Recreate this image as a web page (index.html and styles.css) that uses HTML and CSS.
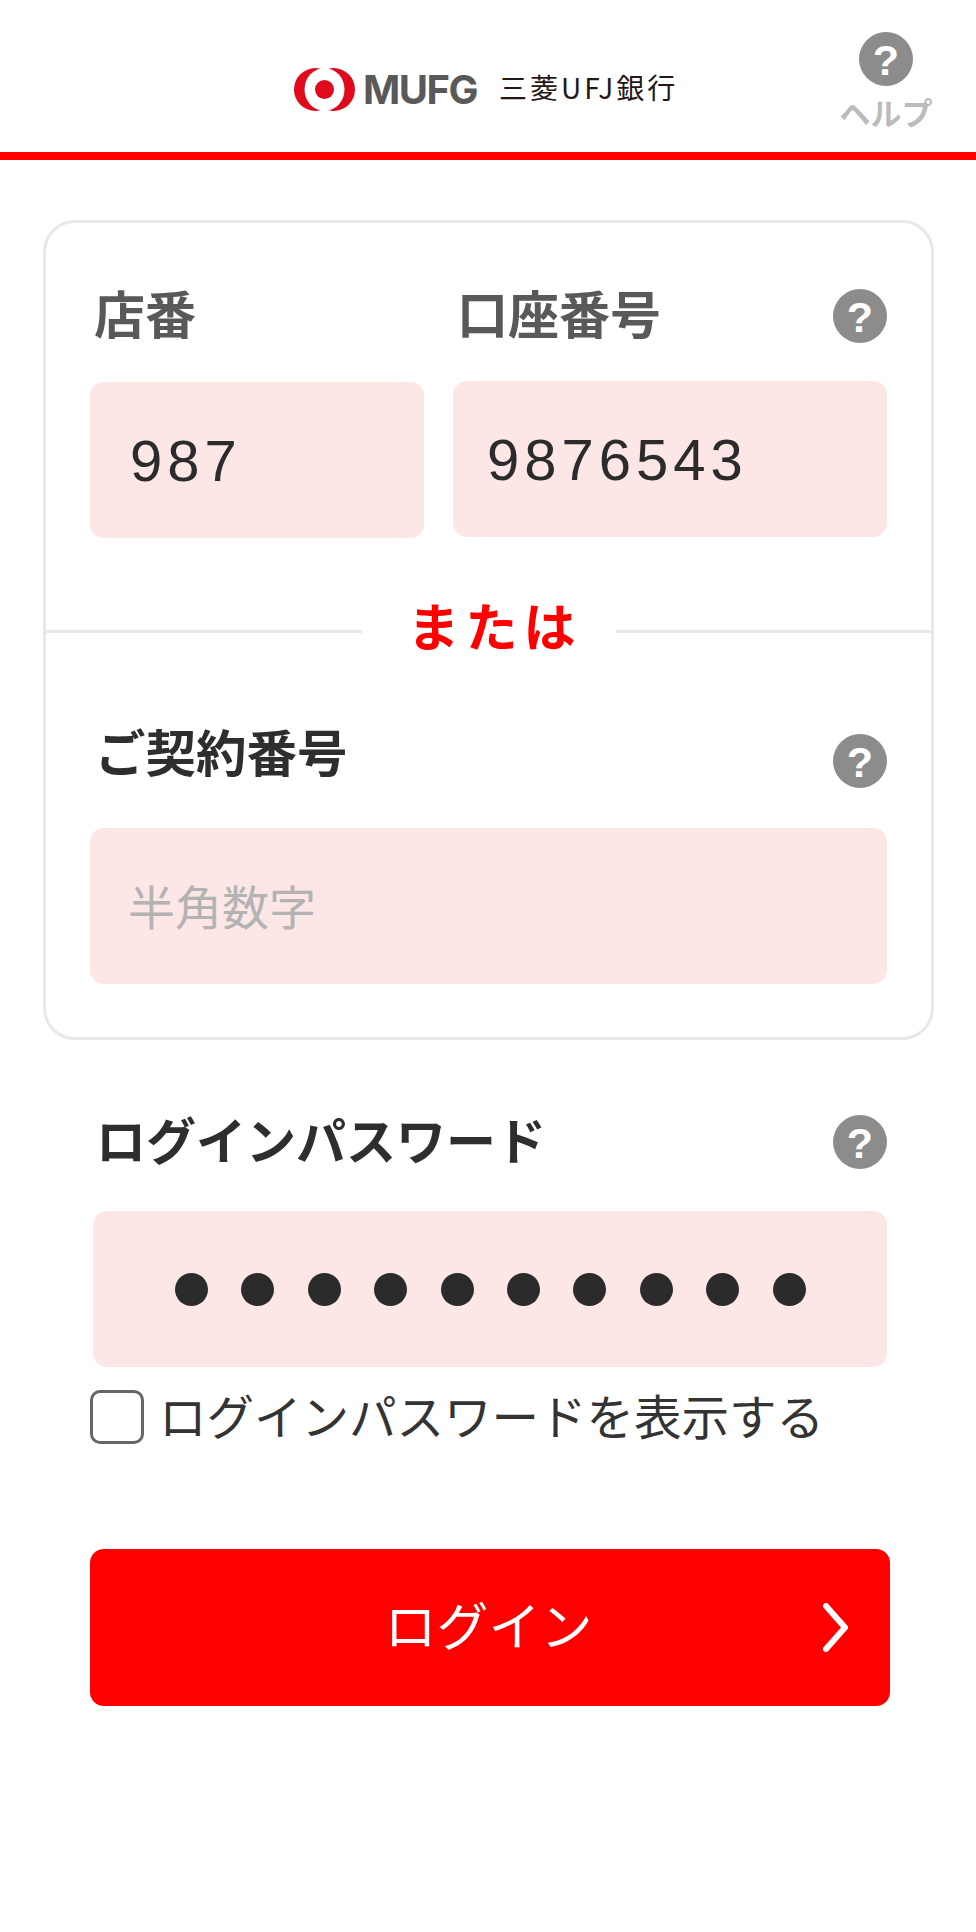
FILE: index.html
```html
<!DOCTYPE html>
<html lang="ja">
<head>
  <meta charset="UTF-8">
  <meta name="viewport" content="width=device-width, initial-scale=1.0">
  <title>三菱UFJ銀行 ログイン</title>
  <link rel="stylesheet" href="styles.css">
</head>
<body>
  <header class="header">
    <div class="brand">
      <svg class="brand-mark" viewBox="0 0 61 43" width="61" height="43">
        <circle cx="21.5" cy="21.5" r="21.5" fill="#e00a1c"/>
        <circle cx="39.5" cy="21.5" r="21.5" fill="#e00a1c"/>
        <ellipse cx="30.5" cy="21.5" rx="20" ry="21.5" fill="#fff"/>
        <circle cx="30.5" cy="21.5" r="9.5" fill="#e00a1c"/>
      </svg>
      <span class="brand-mufg">MUFG</span>
      <span class="brand-bank">三菱UFJ銀行</span>
    </div>
    <a class="help-link" href="#">
      <span class="q-icon">?</span>
      <span class="help-text">ヘルプ</span>
    </a>
  </header>

  <main class="content">
    <section class="card">
      <div class="branch-row">
        <div class="field-shop">
          <div class="label-row"><span class="label label-grey">店番</span></div>
          <div class="input input-value">987</div>
        </div>
        <div class="field-account">
          <div class="label-row">
            <span class="label label-grey">口座番号</span>
            <span class="q-icon">?</span>
          </div>
          <div class="input input-value">9876543</div>
        </div>
      </div>

      <div class="or-row"><span class="or-text">または</span></div>

      <div class="contract">
        <div class="label-row">
          <span class="label">ご契約番号</span>
          <span class="q-icon">?</span>
        </div>
        <div class="input input-placeholder">半角数字</div>
      </div>
    </section>

    <section class="password">
      <div class="label-row">
        <span class="label">ログインパスワード</span>
        <span class="q-icon">?</span>
      </div>
      <div class="input input-dots">
        <i></i><i></i><i></i><i></i><i></i><i></i><i></i><i></i><i></i><i></i>
      </div>
      <label class="show-pass">
        <span class="checkbox"></span>
        <span class="show-text">ログインパスワードを表示する</span>
      </label>
    </section>

    <button class="login-btn">
      <span>ログイン</span>
      <svg class="chevron" viewBox="0 0 25 49" width="25" height="49">
        <path d="M3 3 L22 24.5 L3 46" fill="none" stroke="#fff" stroke-width="6" stroke-linecap="round" stroke-linejoin="round"/>
      </svg>
    </button>
  </main>
</body>
</html>
```

FILE: styles.css
```css
* {
  box-sizing: border-box;
}

body {
  margin: 0;
  min-height: 1932px;
  background: #fff;
  color: #2e2e2e;
  font-family: "Liberation Sans", "Noto Sans CJK JP", sans-serif;
}

.header {
  position: relative;
  height: 160px;
  border-bottom: 8px solid #f00;
}

.brand {
  display: flex;
  align-items: center;
  padding: 66px 0 0 294px;
}

.brand-mark {
  display: block;
}

.brand-mufg {
  margin-left: 8px;
  font-family: Inter, "Liberation Sans", sans-serif;
  font-size: 40px;
  font-weight: 700;
  letter-spacing: -1.5px;
  line-height: 43px;
  color: #595959;
}

.brand-bank {
  margin-left: 22px;
  margin-bottom: 4px;
  font-family: "Noto Sans CJK JP", sans-serif;
  font-size: 28px;
  line-height: 43px;
  letter-spacing: 3px;
  color: #231815;
}

.help-link {
  position: absolute;
  top: 32px;
  left: 841px;
  width: 90px;
  display: flex;
  flex-direction: column;
  align-items: center;
  text-decoration: none;
}

.help-text {
  margin-top: 4px;
  font-family: "Noto Sans CJK JP", sans-serif;
  font-size: 31px;
  font-weight: 700;
  line-height: 44px;
  color: #bbb;
  white-space: nowrap;
}

.q-icon {
  flex: none;
  width: 54px;
  height: 54px;
  border-radius: 50%;
  background: #8c8c8c;
  color: #fff;
  font-family: "Liberation Sans", sans-serif;
  font-size: 43px;
  font-weight: 700;
  line-height: 56px;
  text-align: center;
}

.content {
  padding: 60px 42px 0 43px;
}

.card {
  height: 820px;
  border: 3px solid #e8e8e8;
  border-radius: 32px;
  padding: 66px 44px 0 44px;
}

.branch-row {
  display: flex;
  gap: 29px;
}

.field-shop {
  width: 334px;
}

.field-account {
  flex: 1;
}

.label-row {
  display: flex;
  align-items: center;
  justify-content: space-between;
  height: 54px;
  padding-left: 4px;
}

.label {
  margin-bottom: 9px;
  font-family: "Noto Sans CJK JP", sans-serif;
  font-size: 51px;
  font-weight: 700;
  line-height: 54px;
  color: #2e2e2e;
}

.label-grey {
  color: #595959;
}

.input {
  height: 156px;
  margin-top: 38px;
  border-radius: 14px;
  background: #fce6e6;
  display: flex;
  align-items: center;
  padding-left: 40px;
}

.field-shop .input {
  margin-top: 39px;
}

.input-value {
  font-size: 58px;
  letter-spacing: 5px;
  color: #2b2b2b;
}

.field-account .input-value {
  padding-left: 34px;
}

.or-row {
  display: flex;
  justify-content: center;
  margin: 92px -44px 0;
  height: 3px;
  background: #e8e8e8;
}

.or-text {
  align-self: center;
  flex: none;
  width: 254px;
  padding: 0 0 14px 12px;
  background: #fff;
  font-family: "Noto Sans CJK JP", sans-serif;
  font-size: 52px;
  font-weight: 700;
  letter-spacing: 6px;
  line-height: 60px;
  text-align: center;
  color: #f00;
}

.contract {
  margin-top: 101px;
}

.contract .label-row {
  padding-left: 5px;
}

.contract .label {
  margin-bottom: 22px;
  font-size: 50.5px;
}

.contract .input {
  margin-top: 40px;
}

.input-placeholder {
  padding: 0 0 4px 38px;
  font-family: "Noto Sans CJK JP", sans-serif;
  font-size: 47px;
  color: #b3b3b3;
}

.password {
  margin-top: 75px;
  padding-left: 47px;
  padding-right: 47px;
}

.password .label-row {
  padding-left: 6px;
}

.password .label {
  font-size: 50px;
}

.input-dots {
  margin-left: 3px;
  margin-top: 42px;
  gap: 33.4px;
  padding-left: 82px;
}

.input-dots i {
  flex: none;
  width: 33px;
  height: 33px;
  border-radius: 50%;
  background: #2b2b2b;
}

.show-pass {
  display: flex;
  align-items: center;
  gap: 15px;
  height: 54px;
  margin-top: 23px;
  font-family: "Noto Sans CJK JP", sans-serif;
  font-size: 47.5px;
  line-height: 54px;
  color: #333;
  white-space: nowrap;
}

.show-text {
  margin-bottom: 4px;
}

.checkbox {
  flex: none;
  width: 54px;
  height: 54px;
  border: 3px solid #666;
  border-radius: 10px;
}

.login-btn {
  position: relative;
  display: block;
  width: 800px;
  height: 157px;
  margin: 105px 0 0 47px;
  padding: 0 3px 8px 0;
  border: none;
  border-radius: 14px;
  background: #f00;
  color: #fff;
  font-family: "Noto Sans CJK JP", sans-serif;
  font-size: 52px;
  font-weight: 400;
  text-align: center;
}

.chevron {
  position: absolute;
  top: 54px;
  right: 42px;
}
```
